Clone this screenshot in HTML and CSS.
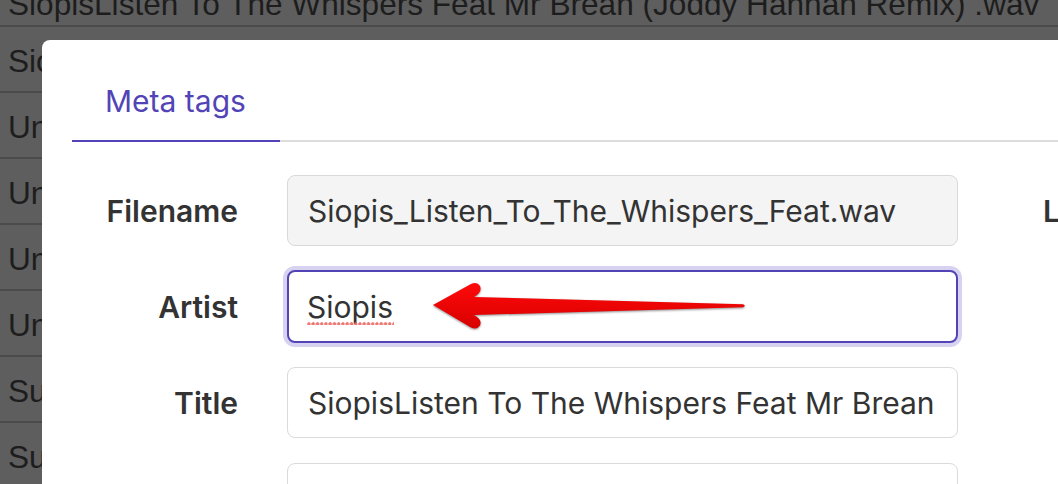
FILE: index.html
```html
<!DOCTYPE html>
<html>
<head>
<meta charset="utf-8">
<link rel="stylesheet" href="styles.css">
</head>
<body>
<div class="bg-table">
  <div class="bg-row first">SiopisListen To The Whispers Feat Mr Brean (Joddy Hannah Remix) .wav</div>
  <div class="bg-row">SiopisListen To The Whispers</div>
  <div class="bg-row">Unknown</div>
  <div class="bg-row">Unknown</div>
  <div class="bg-row">Unknown</div>
  <div class="bg-row">Unknown</div>
  <div class="bg-row">Summer</div>
  <div class="bg-row">Summer</div>
</div>

<div class="modal">
  <div class="tabs">
    <div class="tab active">Meta tags</div>
  </div>
  <div class="form">
    <div class="label">Filename</div>
    <div class="field readonly"><span class="field-text">Siopis_Listen_To_The_Whispers_Feat.wav</span></div>
    <div class="label label-2">Length</div>

    <div class="label">Artist</div>
    <div class="field focused">
      <span class="field-text"><span class="misspelled">Siopis</span></span>
      <svg class="arrow" width="340" height="56" viewBox="0 0 340 56">
        <defs>
          <linearGradient id="ag" x1="0" y1="0" x2="0" y2="1">
            <stop offset="0" stop-color="#ff0a0a"/>
            <stop offset="1" stop-color="#d80000"/>
          </linearGradient>
        </defs>
        <path d="M12 25 L50 4 Q56 1 59 6 Q61 11 56 15 L53 17 L322 24.3 Q325.5 25.8 322 27.3 L53 35 L56 37 Q61 40.5 59 45.5 Q56 50 50 47.5 Z" fill="url(#ag)"/>
      </svg>
    </div>
    <div></div>

    <div class="label">Title</div>
    <div class="field"><span class="field-text">SiopisListen To The Whispers Feat Mr Brean (Joddy Hannah Remix)</span></div>
    <div></div>

    <div class="label"></div>
    <div class="field"><span class="field-text"></span></div>
    <div></div>
  </div>
</div>
</body>
</html>
```

FILE: styles.css
```css
html, body {
  margin: 0;
  padding: 0;
}
body {
  width: 1058px;
  height: 484px;
  overflow: hidden;
  background: #5e5e5e;
  position: relative;
  font-family: "Inter", "Noto Sans", sans-serif;
}

.bg-table {
  font-family: "Liberation Sans", Arial, sans-serif;
  font-size: 31.6px;
  color: #1d1d1d;
}
.bg-row {
  height: 60px;
  line-height: 60px;
  padding: 4px 0 0 8px;
  border-bottom: 2px solid #4b4b4b;
  white-space: nowrap;
  overflow: hidden;
}
.bg-row.first {
  height: 36px;
  line-height: 30px;
  padding-top: 0;
  margin-top: -11px;
}

.modal {
  position: absolute;
  left: 42px;
  top: 40px;
  right: -60px;
  bottom: -200px;
  background: #ffffff;
  border-radius: 8px;
  padding-left: 30px;
}

.tabs {
  display: flex;
  border-bottom: 2px solid #dcdcdc;
}
.tab {
  font-size: 30px;
  line-height: 36px;
  padding: 43px 34px 21px 33px;
  color: #5244b6;
  margin-bottom: -2px;
  border-bottom: 2px solid transparent;
}
.tab.active {
  border-bottom-color: #5244b6;
}

.form {
  display: grid;
  grid-template-columns: 166px 671px 1fr;
  grid-auto-rows: 71px;
  column-gap: 49px;
  row-gap: 25px;
  padding-top: 33px;
  align-items: center;
}
.label {
  text-align: right;
  font-size: 30px;
  font-weight: 600;
  color: #333333;
  white-space: nowrap;
}
.label-2 {
  text-align: left;
  padding-left: 36px;
}

.field {
  position: relative;
  box-sizing: border-box;
  height: 71px;
  border: 1.5px solid #dadada;
  border-radius: 8px;
  background: #ffffff;
  padding: 0 19px 0 20px;
  display: flex;
  align-items: center;
  font-size: 30px;
  color: #333333;
}
.field.readonly {
  background: #f4f4f4;
  border-color: #d9d9d9;
}
.field.focused {
  border: 2px solid #5244b6;
  height: 73px;
  box-shadow: 0 0 0 4px #d7d2f0;
  padding-left: 18px;
}
.field-text {
  display: block;
  flex: 1;
  white-space: nowrap;
  overflow: hidden;
}

.misspelled {
  position: relative;
  display: inline-block;
}
.misspelled::after {
  content: "";
  position: absolute;
  left: 0;
  right: -1px;
  bottom: -1px;
  height: 4px;
  background-image: radial-gradient(circle at 2px 2px, rgba(236, 96, 90, 0.85) 1.5px, rgba(236, 96, 90, 0) 2px);
  background-size: 4.25px 4px;
  background-repeat: repeat-x;
}

.arrow {
  position: absolute;
  left: 132px;
  top: 8px;
  filter: drop-shadow(0 1.5px 1px rgba(0, 0, 0, 0.45));
}
```
